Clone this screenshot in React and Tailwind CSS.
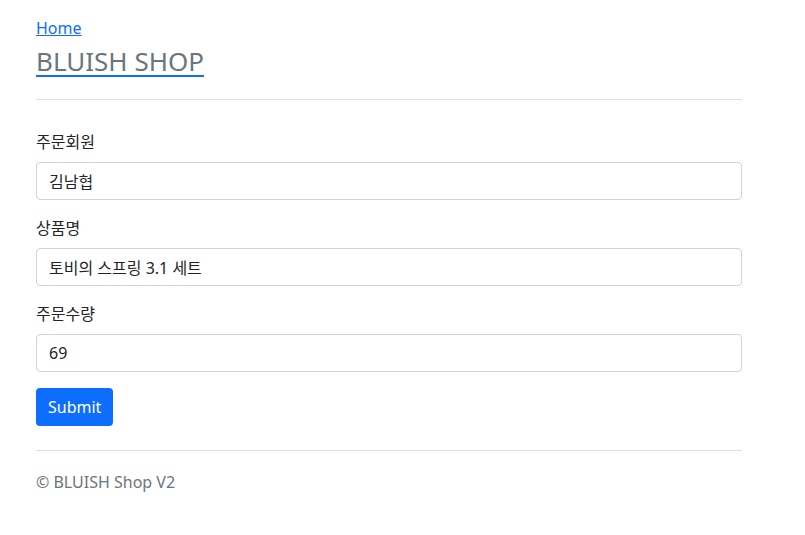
import React from "react";

const fields = [
    { label: "주문회원", value: "김남협" },
    { label: "상품명", value: "토비의 스프링 3.1 세트" },
    { label: "주문수량", value: "69" },
];

export default function App() {
    return (
        <div className="min-h-screen bg-white text-[#212529] text-base" style={{ fontFamily: '"Noto Sans", "Noto Sans CJK KR", sans-serif' }}>
            <div className="w-[706px] ml-[36px] pt-[16px]">
                <a href="#" className="block leading-6 text-[#0d6efd] underline">Home</a>
                <h1 className="mt-[3px] text-[26px] leading-[36px] text-[#6c757d] underline decoration-[#0d6efd] underline-offset-[4px] decoration-2">
                    BLUISH SHOP
                </h1>
                <hr className="mt-[20px] mb-[30px] border-t border-[#dedede]" />

                <form>
                    {fields.map((f, i) => (
                        <div key={i} className="mb-[16px]">
                            <label className="block leading-6 mb-[8px]">{f.label}</label>
                            <input
                                className="w-full h-[38px] px-[12px] border border-[#ced4da] rounded-[4px] leading-6 outline-none"
                                defaultValue={f.value}
                            />
                        </div>
                    ))}
                    <button type="button" className="h-[38px] px-[12px] bg-[#0d6efd] text-white rounded-[4px] leading-6">
                        Submit
                    </button>
                </form>

                <hr className="mt-[24px] border-t border-[#dedede]" />
                <p className="mt-[19px] leading-6 text-[#6c757d]">© BLUISH Shop V2</p>
            </div>
        </div>
    );
}
